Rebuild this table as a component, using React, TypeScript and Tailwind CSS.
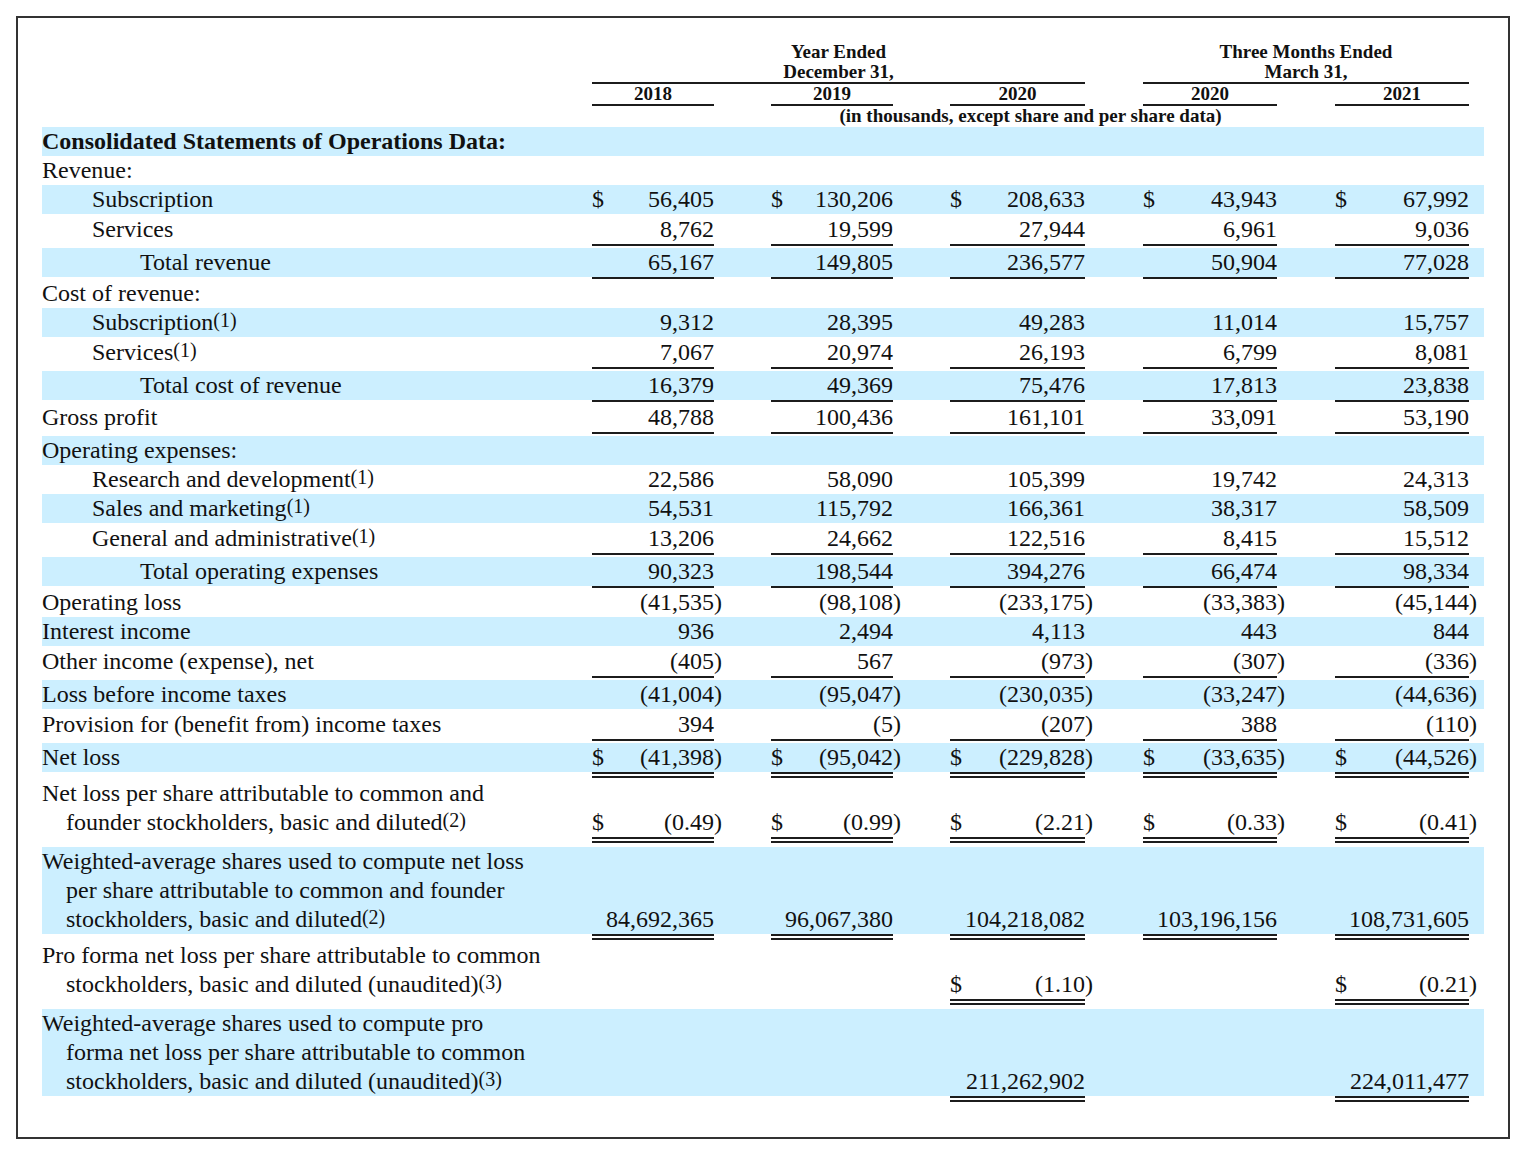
type Rule = 'single' | 'double' | null;

interface Row {
  label: string[];
  note?: string;
  indent?: 0 | 1 | 2;
  bold?: boolean;
  blue?: boolean;
  values?: (string | null)[];
  dollar?: boolean;
  line?: Rule;
}

// label | 2018 | gap | 2019 | gap | 2020 | gap | Q1 2020 | gap | Q1 2021 | tail
const grid =
  'grid grid-cols-[550px_122px_57px_122px_57px_135px_58px_134px_58px_134px_15px]';
const cols = ['col-start-2', 'col-start-4', 'col-start-6', 'col-start-8', 'col-start-10'];
const indents = ['pl-0', 'pl-[50px]', 'pl-[98px]'];
const years = ['2018', '2019', '2020', '2020', '2021'];

const rules = {
  single: 'border-b-2 border-[#1c1c1c]',
  double: 'border-b-[6px] border-double border-[#1c1c1c]',
};
// same height as the rule, so every cell lines up and the fill stops above the rule
const spacers = {
  single: 'border-b-2 border-transparent',
  double: 'border-b-[6px] border-transparent',
};

const rows: Row[] = [
  { label: ['Consolidated Statements of Operations Data:'], bold: true, blue: true },
  { label: ['Revenue:'] },
  {
    label: ['Subscription'], indent: 1, blue: true, dollar: true,
    values: ['56,405', '130,206', '208,633', '43,943', '67,992'],
  },
  {
    label: ['Services'], indent: 1, line: 'single',
    values: ['8,762', '19,599', '27,944', '6,961', '9,036'],
  },
  {
    label: ['Total revenue'], indent: 2, blue: true, line: 'single',
    values: ['65,167', '149,805', '236,577', '50,904', '77,028'],
  },
  { label: ['Cost of revenue:'] },
  {
    label: ['Subscription'], note: '1', indent: 1, blue: true,
    values: ['9,312', '28,395', '49,283', '11,014', '15,757'],
  },
  {
    label: ['Services'], note: '1', indent: 1, line: 'single',
    values: ['7,067', '20,974', '26,193', '6,799', '8,081'],
  },
  {
    label: ['Total cost of revenue'], indent: 2, blue: true, line: 'single',
    values: ['16,379', '49,369', '75,476', '17,813', '23,838'],
  },
  {
    label: ['Gross profit'], line: 'single',
    values: ['48,788', '100,436', '161,101', '33,091', '53,190'],
  },
  { label: ['Operating expenses:'], blue: true },
  {
    label: ['Research and development'], note: '1', indent: 1,
    values: ['22,586', '58,090', '105,399', '19,742', '24,313'],
  },
  {
    label: ['Sales and marketing'], note: '1', indent: 1, blue: true,
    values: ['54,531', '115,792', '166,361', '38,317', '58,509'],
  },
  {
    label: ['General and administrative'], note: '1', indent: 1, line: 'single',
    values: ['13,206', '24,662', '122,516', '8,415', '15,512'],
  },
  {
    label: ['Total operating expenses'], indent: 2, blue: true, line: 'single',
    values: ['90,323', '198,544', '394,276', '66,474', '98,334'],
  },
  {
    label: ['Operating loss'],
    values: ['(41,535)', '(98,108)', '(233,175)', '(33,383)', '(45,144)'],
  },
  {
    label: ['Interest income'], blue: true,
    values: ['936', '2,494', '4,113', '443', '844'],
  },
  {
    label: ['Other income (expense), net'], line: 'single',
    values: ['(405)', '567', '(973)', '(307)', '(336)'],
  },
  {
    label: ['Loss before income taxes'], blue: true,
    values: ['(41,004)', '(95,047)', '(230,035)', '(33,247)', '(44,636)'],
  },
  {
    label: ['Provision for (benefit from) income taxes'], line: 'single',
    values: ['394', '(5)', '(207)', '388', '(110)'],
  },
  {
    label: ['Net loss'], blue: true, dollar: true, line: 'double',
    values: ['(41,398)', '(95,042)', '(229,828)', '(33,635)', '(44,526)'],
  },
  {
    label: ['Net loss per share attributable to common and', 'founder stockholders, basic and diluted'],
    note: '2', dollar: true, line: 'double',
    values: ['(0.49)', '(0.99)', '(2.21)', '(0.33)', '(0.41)'],
  },
  {
    label: [
      'Weighted-average shares used to compute net loss',
      'per share attributable to common and founder',
      'stockholders, basic and diluted',
    ],
    note: '2', blue: true, line: 'double',
    values: ['84,692,365', '96,067,380', '104,218,082', '103,196,156', '108,731,605'],
  },
  {
    label: ['Pro forma net loss per share attributable to common', 'stockholders, basic and diluted (unaudited)'],
    note: '3', dollar: true, line: 'double',
    values: [null, null, '(1.10)', null, '(0.21)'],
  },
  {
    label: [
      'Weighted-average shares used to compute pro',
      'forma net loss per share attributable to common',
      'stockholders, basic and diluted (unaudited)',
    ],
    note: '3', blue: true, line: 'double',
    values: [null, null, '211,262,902', null, '224,011,477'],
  },
];

function Note({ n }: { n: string }) {
  return <span className="relative -top-[3px] text-[20px] leading-none">({n})</span>;
}

function TableRow({ row }: { row: Row }) {
  let pad = '';
  if (!row.blue && row.line === 'single') pad = 'pt-px pb-[2px]';
  if (!row.blue && row.line === 'double') pad = 'pb-1';
  if (row.blue && row.line === 'double') pad = 'pb-px';
  const fill = row.blue ? 'bg-[#ccefff] bg-clip-padding' : '';
  const spacer = row.line ? spacers[row.line] : '';

  const cells = [];
  for (let c = 1; c < 11; c++) {
    const idx = c % 2 === 1 && c < 10 ? (c - 1) / 2 : -1;
    const v = idx >= 0 ? row.values?.[idx] ?? null : null;
    if (v === null) {
      cells.push(<div key={c} className={`${fill} ${spacer}`} />);
      continue;
    }
    const neg = v.endsWith(')');
    cells.push(
      <div key={c} className={`flex items-end justify-between ${fill} ${row.line ? rules[row.line] : ''}`}>
        <span>{row.dollar ? '$' : ''}</span>
        {/* closing paren hangs past the column edge, painted above the next cell */}
        <span className={neg ? 'relative -mr-2' : ''}>{v}</span>
      </div>
    );
  }

  return (
    <div className={`${grid} ${pad}`}>
      <div className={`${indents[row.indent ?? 0]} ${row.bold ? 'font-bold' : ''} ${fill} ${spacer}`}>
        {row.label.map((t, i) => (
          <div key={i} className={i > 0 ? 'pl-6' : ''}>
            {t}
            {i === row.label.length - 1 && row.note && <Note n={row.note} />}
          </div>
        ))}
      </div>
      {cells}
    </div>
  );
}

export default function App() {
  return (
    <div className="min-h-screen bg-white p-4 font-['Liberation_Serif',serif] text-[24px] leading-[29px] text-[#111]">
      <div className="w-[1494px] border-2 border-[#333] px-6 pt-6 pb-[34px]">
        {/* Column headers */}
        <div className={`${grid} pb-px text-[19px] font-bold leading-[20px]`}>
          <div className="col-start-2 col-end-7 row-start-1 border-b-2 border-[#1c1c1c] text-center">
            Year Ended
            <br />
            December 31,
          </div>
          <div className="col-start-8 col-end-11 row-start-1 border-b-2 border-[#1c1c1c] text-center">
            Three Months Ended
            <br />
            March 31,
          </div>
          {years.map((y, i) => (
            <div key={i} className={`${cols[i]} row-start-2 border-b-2 border-[#1c1c1c] text-center`}>
              {y}
            </div>
          ))}
          <div className="col-start-2 col-end-11 row-start-3 text-center">
            (in thousands, except share and per share data)
          </div>
        </div>

        {rows.map((r, i) => (
          <TableRow key={i} row={r} />
        ))}
      </div>
    </div>
  );
}
